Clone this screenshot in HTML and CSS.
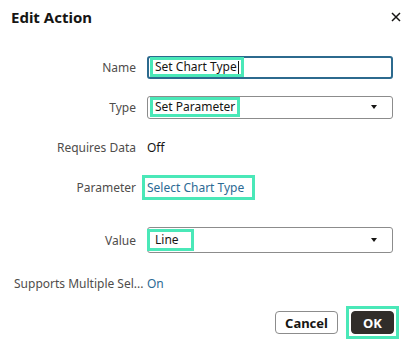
FILE: index.html
```html
<!DOCTYPE html>
<html lang="en">
<head>
    <meta charset="UTF-8">
    <meta name="viewport" content="width=device-width, initial-scale=1.0">
    <title>Edit Action</title>
    <link rel="stylesheet" href="styles.css">
</head>
<body>
    <div class="dialog">
        <div class="dialog-head">
            <h1>Edit Action</h1>
            <button class="close" title="Close">
                <svg width="10" height="10" viewBox="0 0 10 10"><path d="M1 1 L9 9 M9 1 L1 9" stroke="#161513" stroke-width="1.5" fill="none"/></svg>
            </button>
        </div>

        <div class="form">
            <div class="row row-name">
                <label>Name</label>
                <div class="input focused">
                    <span class="mark">Set Chart Type<span class="caret"></span></span>
                </div>
            </div>

            <div class="row row-type">
                <label>Type</label>
                <div class="input select">
                    <span class="mark">Set Parameter</span>
                    <span class="arrow"></span>
                </div>
            </div>

            <div class="row row-req">
                <label>Requires Data</label>
                <span class="value">Off</span>
            </div>

            <div class="row row-param">
                <label>Parameter</label>
                <span class="mark link param">Select Chart Type</span>
            </div>

            <div class="row row-value">
                <label>Value</label>
                <div class="input select tall">
                    <span class="mark line">Line</span>
                    <span class="arrow"></span>
                </div>
            </div>

            <div class="row row-multi">
                <label class="long" title="Supports Multiple Selection">Supports Multiple Sel...</label>
                <span class="value link">On</span>
            </div>
        </div>

        <div class="dialog-foot">
            <button class="btn btn-cancel">Cancel</button>
            <span class="ok-mark"><button class="btn btn-ok">OK</button></span>
        </div>
    </div>
</body>
</html>
```

FILE: styles.css
```css
html, body {
    margin: 0;
    padding: 0;
    background: #fff;
    font-family: "Noto Sans", "Open Sans", sans-serif;
    font-size: 12px;
    color: #161513;
}
.dialog {
    width: 411px;
    height: 346px;
    box-sizing: border-box;
}
.dialog-head {
    display: flex;
    justify-content: space-between;
    align-items: center;
    padding: 6px 9px 0 11px;
    height: 22px;
}
.dialog-head h1 {
    margin: 0;
    font-size: 15px;
    font-weight: 700;
    line-height: 20px;
}
.close {
    border: none;
    background: none;
    padding: 0;
    width: 12px;
    height: 12px;
    display: flex;
    align-items: center;
    justify-content: center;
    cursor: pointer;
}
.form {
    padding-top: 27px;
}
.row {
    display: flex;
    align-items: center;
    height: 24px;
    margin-bottom: 16px;
}
.row label {
    width: 122px;
    padding-left: 14px;
    padding-right: 11px;
    text-align: right;
    color: #4f4d4b;
    flex-shrink: 0;
}
.row label.long {
    width: 131px;
    padding-right: 2px;
    text-align: left;
    white-space: nowrap;
    overflow: hidden;
}
.row-param {
    height: 25px;
}
.row-value {
    height: 26px;
    margin-top: 27px;
    margin-bottom: 18px;
}
.row-multi {
    margin-bottom: 11px;
}
.input {
    width: 246px;
    height: 23px;
    box-sizing: border-box;
    border: 1px solid #8c8c8c;
    border-radius: 3px;
    display: flex;
    align-items: center;
    padding-left: 2px;
}
.input.focused {
    border: 2px solid #2c6a8e;
    padding-left: 1px;
}
.input.tall {
    height: 26px;
    padding-left: 0;
}
.mark {
    display: inline-flex;
    align-items: center;
    border: 3px solid #4ae8b8;
    padding: 0 2px;
    line-height: 14px;
    white-space: nowrap;
}
.mark.line {
    margin-left: -1px;
    padding: 1px 12px 1px 5px;
}
.link {
    color: #2c6a94;
}
.mark.param {
    margin-left: -5px;
    padding: 3px 8px 3px 2px;
    line-height: 13px;
}
.caret {
    display: inline-block;
    width: 1px;
    height: 13px;
    margin-left: 1px;
    background: #161513;
}
.arrow {
    margin-left: auto;
    margin-right: 15px;
    width: 0;
    height: 0;
    border-left: 3.5px solid transparent;
    border-right: 3.5px solid transparent;
    border-top: 4px solid #161513;
}
.dialog-foot {
    display: flex;
    justify-content: flex-end;
    align-items: center;
    gap: 8px;
    padding-right: 12px;
}
.btn {
    height: 23px;
    padding: 0;
    border: 1px solid #8c8c8c;
    border-radius: 4px;
    background: #fff;
    font-family: inherit;
    font-size: 13px;
    font-weight: 700;
    color: #161513;
    cursor: pointer;
}
.btn-cancel {
    width: 63px;
}
.ok-mark {
    display: inline-flex;
    border: 3px solid #4ae8b8;
    padding: 2px;
}
.btn-ok {
    width: 43px;
    background: #312d2a;
    border-color: #312d2a;
    color: #fff;
}
```
